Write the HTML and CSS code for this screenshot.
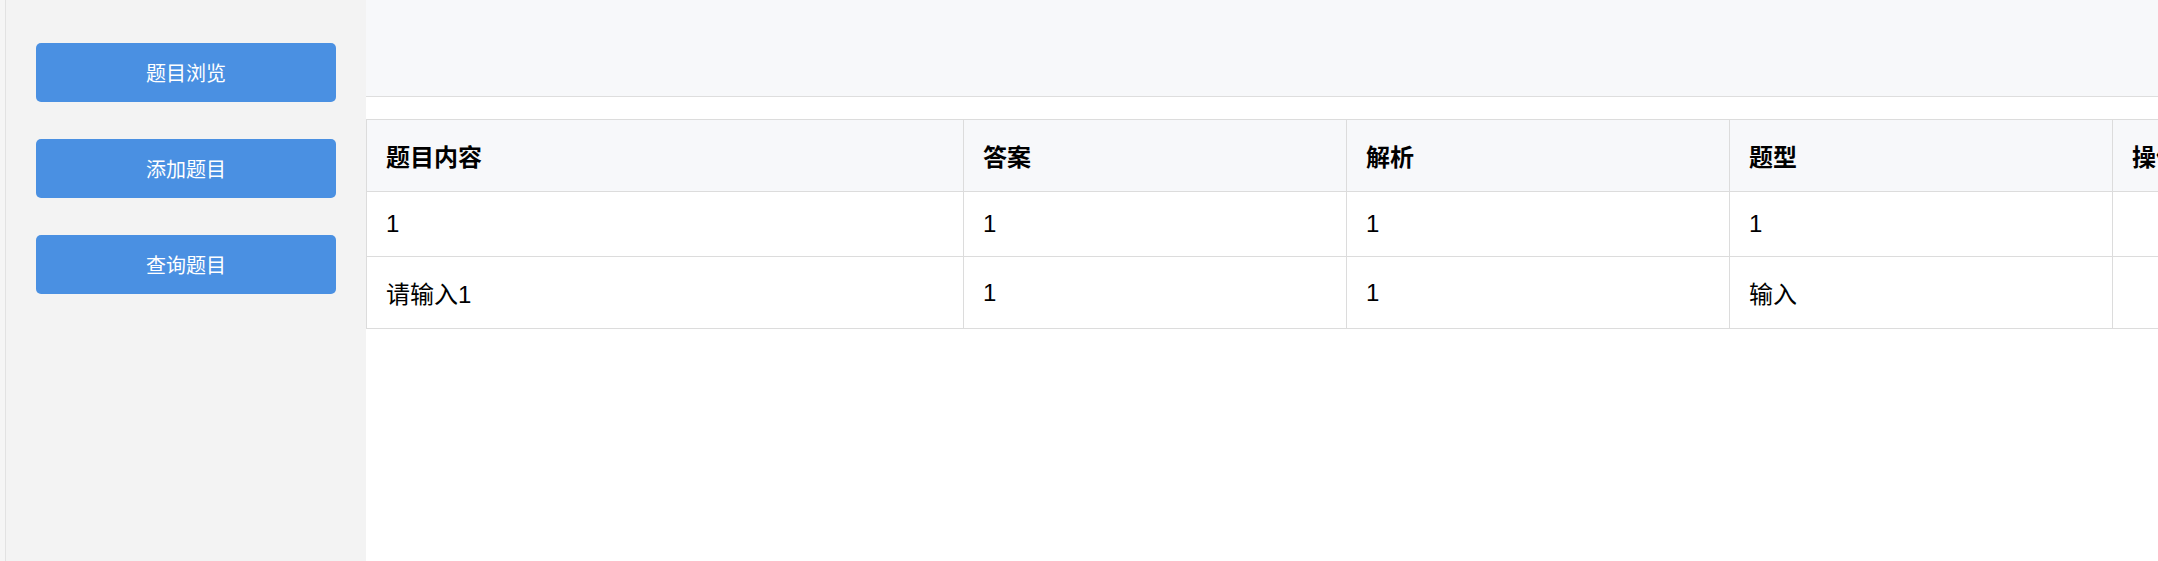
FILE: index.html
```html
<!DOCTYPE html>
<html lang="zh-CN">
<head>
<meta charset="utf-8">
<title>题目管理</title>
<link rel="stylesheet" href="styles.css">
</head>
<body>
<div class="app">
  <aside class="sidebar">
    <nav class="menu">
      <button class="menu-btn" type="button">题目浏览</button>
      <button class="menu-btn" type="button">添加题目</button>
      <button class="menu-btn" type="button">查询题目</button>
    </nav>
  </aside>
  <main class="main">
    <header class="topbar"></header>
    <section class="content">
      <table class="qtable">
        <colgroup>
          <col class="col-wide">
          <col class="col-std">
          <col class="col-std">
          <col class="col-std">
          <col class="col-std">
        </colgroup>
        <thead>
          <tr>
            <th>题目内容</th>
            <th>答案</th>
            <th>解析</th>
            <th>题型</th>
            <th>操作</th>
          </tr>
        </thead>
        <tbody>
          <tr>
            <td>1</td>
            <td>1</td>
            <td>1</td>
            <td>1</td>
            <td></td>
          </tr>
          <tr>
            <td>请输入1</td>
            <td>1</td>
            <td>1</td>
            <td>输入</td>
            <td></td>
          </tr>
        </tbody>
      </table>
    </section>
  </main>
</div>
</body>
</html>
```

FILE: styles.css
```css
* {
  box-sizing: border-box;
}

html, body {
  margin: 0;
  padding: 0;
  height: 100%;
}

body {
  font-family: "Liberation Sans", "Noto Sans CJK SC", sans-serif;
  color: #000;
  background: #ffffff;
  overflow: hidden;
}

.app {
  display: flex;
  height: 100%;
}

.sidebar {
  flex: 0 0 366px;
  background: #f5f5f5;
  padding-left: 5px;
  display: flex;
}

.menu {
  flex: 1;
  background: #f3f3f3;
  border-left: 1px solid #e2e2e2;
  display: flex;
  flex-direction: column;
  gap: 37px;
  padding: 43px 0 0 30px;
}

.menu-btn {
  width: 300px;
  height: 59px;
  border: none;
  border-radius: 5px;
  background: #4a90e2;
  color: #ffffff;
  font-family: "Liberation Sans", "Noto Sans CJK SC", sans-serif;
  font-size: 20px;
  font-weight: 400;
  padding: 0;
  cursor: pointer;
}

.main {
  flex: 1;
  min-width: 0;
  overflow: hidden;
  display: flex;
  flex-direction: column;
}

.topbar {
  height: 97px;
  background: #f7f8fa;
  border-bottom: 1px solid #dedede;
  flex: 0 0 auto;
}

.content {
  padding-top: 22px;
}

.qtable {
  border-collapse: collapse;
  table-layout: fixed;
  width: 2129px;
  font-size: 24px;
}

.col-wide {
  width: 597px;
}

.col-std {
  width: 383px;
}

.qtable th,
.qtable td {
  border: 1px solid #dcdcdc;
  padding: 18px 19px;
  text-align: left;
  vertical-align: middle;
}

.qtable th {
  background: #f7f8fa;
  font-weight: 700;
}

.qtable td {
  background: #ffffff;
  font-weight: 400;
}
```
